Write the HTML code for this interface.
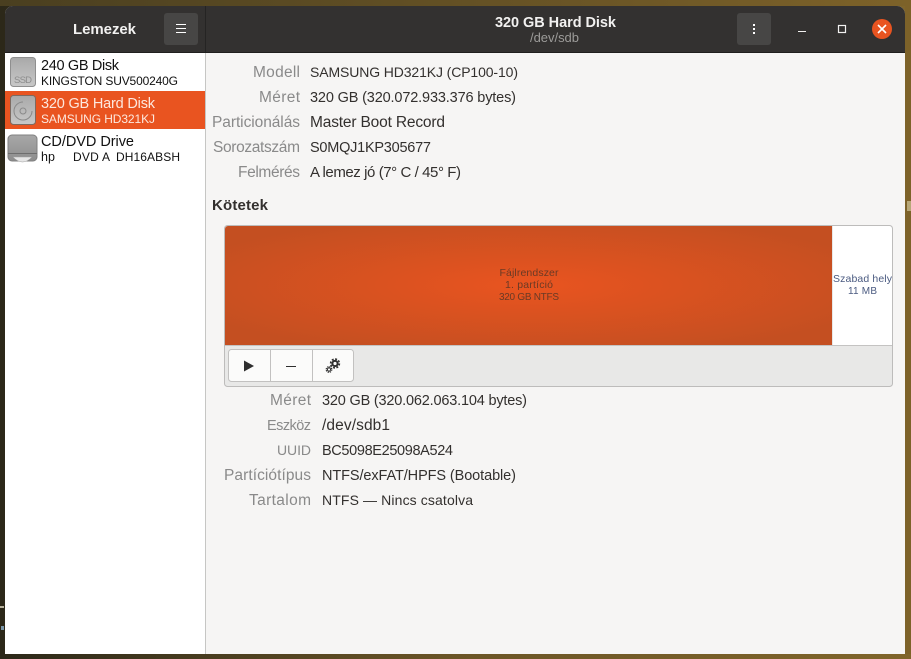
<!DOCTYPE html>
<html><head><meta charset="utf-8"><style>
html,body{margin:0;padding:0;width:911px;height:659px;overflow:hidden;background:#3a3018}
svg{display:block}
text{font-family:"Liberation Sans",sans-serif;font-size:14.5px;fill:#3d3846}
.l{fill:#8a8a8a;font-size:15.5px}
.v{fill:#33302e}
.s{font-size:10.5px;fill:#6a3a25}
</style></head><body>
<svg width="911" height="659" viewBox="0 0 911 659" xmlns="http://www.w3.org/2000/svg">
<defs>
<linearGradient id="bg" x1="0" y1="0" x2="1" y2="0"><stop offset="0" stop-color="#2c2819"/><stop offset="0.5" stop-color="#6b5526"/><stop offset="1" stop-color="#80652a"/></linearGradient>
<linearGradient id="top" x1="0" y1="0" x2="1" y2="0"><stop offset="0" stop-color="#4a3f20"/><stop offset="1" stop-color="#7d6229"/></linearGradient>
<radialGradient id="or" cx="50%" cy="50%" r="60%"><stop offset="0" stop-color="#e95420"/><stop offset="1" stop-color="#c44f21"/></radialGradient>
<linearGradient id="ic" x1="0" y1="0" x2="0" y2="1"><stop offset="0" stop-color="#a9a9a9"/><stop offset="1" stop-color="#c8c8c8"/></linearGradient>
<linearGradient id="dvd" x1="0" y1="0" x2="0" y2="1"><stop offset="0" stop-color="#a8a8a8"/><stop offset="1" stop-color="#8d8d8d"/></linearGradient>
</defs>
<rect width="911" height="659" fill="url(#bg)"/>
<rect x="0" y="0" width="911" height="6" fill="url(#top)"/>
<rect x="905" y="0" width="6" height="659" fill="#7d6229"/>
<rect x="0" y="654" width="911" height="5" fill="url(#bg)"/>
<rect x="0" y="606" width="4" height="2" fill="#b8b29c"/>
<rect x="1" y="626" width="3" height="4" fill="#7a96a8"/>
<rect x="907" y="201" width="4" height="10" fill="#b8a878"/>
<!-- window -->
<path d="M5 654V14a8 8 0 0 1 8-8H897a8 8 0 0 1 8 8V654Z" fill="#f6f5f4"/>
<path d="M5 52V14a8 8 0 0 1 8-8H897a8 8 0 0 1 8 8V52Z" fill="#333130"/>
<rect x="5" y="52" width="900" height="1" fill="#201f1e"/>
<rect x="205" y="6" width="1" height="46" fill="#252423"/>
<!-- sidebar -->
<rect x="5" y="53" width="200" height="601" fill="#ffffff"/>
<rect x="205" y="53" width="1" height="601" fill="#c6c6c4"/>
<rect x="5" y="91" width="200" height="38" fill="#e95420"/>
<!-- header text -->
<text x="73" y="34" textLength="63" style="font-weight:700;fill:#f2f1f0;font-size:15px">Lemezek</text>
<rect x="164" y="13" width="34" height="32" rx="3" fill="#474645"/>
<path d="M176 24h10v1h-10zM176 28h10v1h-10zM176 32h10v1h-10z" fill="#ffffff"/>
<text x="495" y="27" textLength="121" style="font-weight:700;fill:#f2f1f0;font-size:14.500px">320 GB Hard Disk</text>
<text x="530" y="42" textLength="49" style="fill:#9c9b99;font-size:13px">/dev/sdb</text>
<rect x="737" y="13" width="34" height="32" rx="3" fill="#474645"/>
<path d="M753 24h2v2h-2zM753 28h2v2h-2zM753 32h2v2h-2z" fill="#ffffff"/>
<rect x="798" y="31" width="8" height="1" fill="#f2f1f0"/>
<rect x="838.500" y="25.500" width="7" height="7" fill="none" stroke="#f2f1f0" stroke-width="1.200"/>
<circle cx="882" cy="29" r="10" fill="#e95420"/>
<path d="M878 25l8 8M886 25l-8 8" stroke="#fff" stroke-width="1.600" fill="none"/>
<!-- sidebar icons -->
<rect x="10.500" y="57.500" width="25" height="29" rx="3" fill="url(#ic)" stroke="#8f8f8f"/>
<text x="14" y="83" textLength="18" style="font-size:9.500px;fill:#8c8c8c">SSD</text>
<rect x="10.500" y="95.500" width="25" height="29" rx="3" fill="url(#ic)" stroke="#7d6a60"/>
<path d="M23 102a9 9 0 1 0 9 9" fill="none" stroke="#8a8a8a"/>
<circle cx="23" cy="111" r="3" fill="none" stroke="#8a8a8a"/>
<path d="M8 139a4 4 0 0 1 4-4H33a4 4 0 0 1 4 4V157a4 4 0 0 1-4 4H12a4 4 0 0 1-4-4Z" fill="url(#dvd)" stroke="#808080"/>
<rect x="8" y="153" width="29" height="1" fill="#6e6e6e"/>
<path d="M13 157Q22.500 167 32 157Z" fill="#e6e6e6" stroke="#a0a0a0" stroke-width=".500"/>
<!-- sidebar text -->
<text x="41" y="70" textLength="78" style="fill:#111">240 GB Disk</text>
<text x="41" y="85" textLength="137" style="fill:#111;font-size:12px">KINGSTON SUV500240G</text>
<text x="41" y="108" textLength="114" style="fill:#fde8de">320 GB Hard Disk</text>
<text x="41" y="123" textLength="114" style="fill:#fde8de;font-size:12px">SAMSUNG HD321KJ</text>
<text x="41" y="146" textLength="93" style="fill:#111">CD/DVD Drive</text>
<text x="41" y="161" textLength="14" style="fill:#111;font-size:12.500px">hp</text>
<text x="73" y="161" textLength="37" style="fill:#111;font-size:12px">DVD A</text>
<text x="116" y="161" textLength="64" style="fill:#111;font-size:12px">DH16ABSH</text>
<!-- labels -->
<text class="l" x="253" y="77" textLength="47">Modell</text>
<text class="l" x="259" y="102" textLength="41">Méret</text>
<text class="l" x="212" y="127" textLength="88">Particionálás</text>
<text class="l" x="213" y="152" textLength="87">Sorozatszám</text>
<text class="l" x="238" y="177" textLength="62">Felmérés</text>
<text class="v" x="310" y="77" textLength="208" style="font-size:14px">SAMSUNG HD321KJ (CP100-10)</text>
<text class="v" x="310" y="102" textLength="206">320 GB (320.072.933.376 bytes)</text>
<text class="v" x="310" y="127" textLength="135" style="font-size:15.500px">Master Boot Record</text>
<text class="v" x="310" y="152" textLength="121">S0MQJ1KP305677</text>
<text class="v" x="310" y="177" textLength="151" style="font-size:15px">A lemez jó (7° C / 45° F)</text>
<text x="212" y="210" textLength="56" style="font-weight:700;fill:#33302e;font-size:15px">Kötetek</text>
<!-- volumes box -->
<rect x="224.500" y="225.500" width="668" height="161" rx="3" fill="#e8e8e7" stroke="#bdbcbb"/>
<path d="M225 345V229a3 3 0 0 1 3-3H832V345Z" fill="url(#or)"/>
<path d="M833 226H889a3 3 0 0 1 3 3V345H833Z" fill="#fff"/>
<rect x="225" y="345" width="667" height="1" fill="#c4c3c2"/>
<text class="s" x="499.500" y="276" textLength="59">Fájlrendszer</text>
<text class="s" x="505" y="288" textLength="48">1. partíció</text>
<text class="s" x="499" y="300" textLength="60" style="font-size:10px">320 GB NTFS</text>
<text x="833" y="282" textLength="59" style="font-size:10.500px;fill:#4a5a80">Szabad hely</text>
<text x="848" y="294" textLength="29" style="font-size:10px;fill:#4a5a80">11 MB</text>
<!-- toolbar buttons -->
<rect x="228.500" y="349.500" width="125" height="32" rx="3" fill="#fbfbfa" stroke="#c2c1c0"/>
<path d="M270.500 350v31M312.500 350v31" stroke="#c2c1c0" fill="none"/>
<path d="M244 360.500L254 366L244 371.500Z" fill="#2e2e2e"/>
<rect x="286" y="366" width="10" height="1" fill="#2e2e2e"/>
<circle cx="335" cy="363.500" r="2.600" fill="none" stroke="#2e2e2e" stroke-width="2"/>
<circle cx="335" cy="363.500" r="4.400" fill="none" stroke="#2e2e2e" stroke-width="1.600" stroke-dasharray="2 1.450"/>
<circle cx="329" cy="369.500" r="1.600" fill="none" stroke="#2e2e2e" stroke-width="1"/>
<circle cx="329" cy="369.500" r="2.800" fill="none" stroke="#2e2e2e" stroke-width="1.200" stroke-dasharray="1.300 .9"/>
<!-- lower labels -->
<text class="l" x="270" y="405" textLength="41">Méret</text>
<text class="l" x="267" y="430" textLength="44" style="font-size:14.500px">Eszköz</text>
<text class="l" x="277" y="455" textLength="34" style="font-size:14px">UUID</text>
<text class="l" x="224" y="480" textLength="87">Partíciótípus</text>
<text class="l" x="249" y="505" textLength="62">Tartalom</text>
<text class="v" x="322" y="405" textLength="205">320 GB (320.062.063.104 bytes)</text>
<text class="v" x="322" y="430" textLength="68" style="font-size:15.500px">/dev/sdb1</text>
<text class="v" x="322" y="455" textLength="131">BC5098E25098A524</text>
<text class="v" x="322" y="480" textLength="194">NTFS/exFAT/HPFS (Bootable)</text>
<text class="v" x="322" y="505" textLength="151" style="font-size:14px">NTFS — Nincs csatolva</text>
</svg>
</body></html>
